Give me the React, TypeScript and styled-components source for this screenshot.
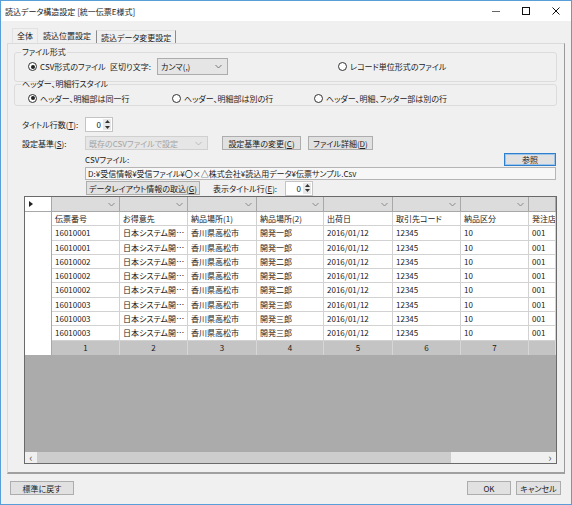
import React from "react";
import styled, { createGlobalStyle } from "styled-components";

const GlobalStyle = createGlobalStyle`
  html, body {
    margin: 0;
    padding: 0;
    background: #f0f0f0;
  }
  body {
    font-family: "Noto Sans CJK JP", "Liberation Sans", sans-serif;
    font-size: 8px;
    color: #1a1a1a;
    font-feature-settings: "palt";
  }
  * {
    box-sizing: border-box;
  }
`;

type Row = [string, string, string, string, string, string, string, string];

const COLUMNS = ["伝票番号", "お得意先", "納品場所(1)", "納品場所(2)", "出荷日", "取引先コード", "納品区分", "発注店"];
const COMPANY = "日本システム開発株式会社";
const ROWS: Row[] = [
  ["16010001", COMPANY, "香川県高松市", "開発一郎", "2016/01/12", "12345", "10", "001"],
  ["16010001", COMPANY, "香川県高松市", "開発一郎", "2016/01/12", "12345", "10", "001"],
  ["16010002", COMPANY, "香川県高松市", "開発二郎", "2016/01/12", "12345", "10", "001"],
  ["16010002", COMPANY, "香川県高松市", "開発二郎", "2016/01/12", "12345", "10", "001"],
  ["16010002", COMPANY, "香川県高松市", "開発二郎", "2016/01/12", "12345", "10", "001"],
  ["16010003", COMPANY, "香川県高松市", "開発三郎", "2016/01/12", "12345", "10", "001"],
  ["16010003", COMPANY, "香川県高松市", "開発三郎", "2016/01/12", "12345", "10", "001"],
  ["16010003", COMPANY, "香川県高松市", "開発三郎", "2016/01/12", "12345", "10", "001"],
];

const Chevron: React.FC<{ color?: string }> = ({ color = "#777" }) => (
  <svg width="7" height="5" viewBox="0 0 7 5">
    <polyline points="0.5,1 3.5,4 6.5,1" fill="none" stroke={color} strokeWidth="1" />
  </svg>
);

const SpinBox: React.FC<{ value: string }> = ({ value }) => (
  <Spin>
    <SpinValue>{value}</SpinValue>
    <SpinArrows>
      <SpinArrow>
        <svg width="5" height="3" viewBox="0 0 5 3">
          <polygon points="0,3 2.5,0 5,3" fill="#333" />
        </svg>
      </SpinArrow>
      <SpinArrow>
        <svg width="5" height="3" viewBox="0 0 5 3">
          <polygon points="0,0 2.5,3 5,0" fill="#333" />
        </svg>
      </SpinArrow>
    </SpinArrows>
  </Spin>
);

const Radio: React.FC<{ checked?: boolean; children: React.ReactNode }> = ({ checked, children }) => (
  <RadioLabel>
    <RadioCircle $checked={checked} />
    {children}
  </RadioLabel>
);

const App: React.FC = () => {
  return (
    <>
      <GlobalStyle />
      <Window>
        <TitleBar>
          <TitleText>読込データ構造設定 [統一伝票E様式]</TitleText>
          <Controls>
            <ControlButton>
              <svg width="10" height="10" viewBox="0 0 10 10">
                <line x1="1" y1="5.5" x2="9" y2="5.5" stroke="#666" strokeWidth="1" />
              </svg>
            </ControlButton>
            <ControlButton>
              <svg width="10" height="10" viewBox="0 0 10 10">
                <rect x="1.5" y="1.5" width="7" height="7" fill="none" stroke="#111" strokeWidth="1" />
              </svg>
            </ControlButton>
            <ControlButton>
              <svg width="10" height="10" viewBox="0 0 10 10">
                <path d="M1.5 1.5 L8.5 8.5 M8.5 1.5 L1.5 8.5" stroke="#111" strokeWidth="1" />
              </svg>
            </ControlButton>
          </Controls>
        </TitleBar>

        <Body>
          <TabStrip>
            <Tab>全体</Tab>
            <Tab $active>読込位置設定</Tab>
            <Tab $outlined>読込データ変更設定</Tab>
          </TabStrip>

          <Panel>
            <Group>
              <Legend>ファイル形式</Legend>
              <FormatRow>
                <Radio checked>CSV形式のファイル</Radio>
                <DelimiterLabel>区切り文字:</DelimiterLabel>
                <Combo $width={71}>
                  <span>カンマ(,)</span>
                  <Chevron />
                </Combo>
                <RecordRadio>
                  <Radio>レコード単位形式のファイル</Radio>
                </RecordRadio>
              </FormatRow>
            </Group>

            <Group $overlap>
              <Legend>ヘッダー、明細行スタイル</Legend>
              <StyleRow>
                <Radio checked>ヘッダー、明細部は同一行</Radio>
                <Radio>ヘッダー、明細部は別の行</Radio>
                <Radio>ヘッダー、明細、フッター部は別の行</Radio>
              </StyleRow>
            </Group>

            <FieldRow $top={11} $height={15}>
              <FieldLabel>タイトル行数(<u>T</u>):</FieldLabel>
              <SpinBox value="0" />
            </FieldRow>

            <FieldRow $top={4} $height={14}>
              <FieldLabel>設定基準(<u>S</u>):</FieldLabel>
              <Combo $width={123} $disabled>
                <span>既存のCSVファイルで設定</span>
                <Chevron color="#bbb" />
              </Combo>
              <Button $width={79} $gap={14}>設定基準の変更(<u>C</u>)</Button>
              <Button $width={65} $gap={7}>ファイル詳細(<u>D</u>)</Button>
            </FieldRow>

            <CsvRow>
              <span>CSVファイル:</span>
              <DefaultButton>参照</DefaultButton>
            </CsvRow>
            <PathField>D:¥受信情報¥受信ファイル¥〇×△株式会社¥読込用データ¥伝票サンプル.Csv</PathField>

            <ImportRow>
              <Button $width={114} $gap={0}>データレイアウト情報の取込(<u>G</u>)</Button>
              <ShowTitleLabel>表示タイトル行(<u>E</u>):</ShowTitleLabel>
              <SpinBox value="0" />
            </ImportRow>

            <Grid>
              <GridRow $height={15}>
                <SelectorCell>
                  <svg width="4" height="6" viewBox="0 0 4 6">
                    <polygon points="0,0 4,3 0,6" fill="#222" />
                  </svg>
                </SelectorCell>
                {COLUMNS.map((c, i) => (
                  <DropCell key={c}>{i < 7 && <Chevron color="#8a8a8a" />}</DropCell>
                ))}
              </GridRow>
              <GridRow $height={14.3}>
                <RowHeadCell />
                {COLUMNS.map((c, ci) => (
                  <DataCell key={c} $clip={ci === 7}>
                    {c}
                  </DataCell>
                ))}
              </GridRow>
              {ROWS.map((r, ri) => (
                <GridRow key={ri} $height={14.3}>
                  <RowHeadCell />
                  {r.map((v, ci) => (
                    <DataCell key={ci} $clip={ci === 7}>
                      {v}
                    </DataCell>
                  ))}
                </GridRow>
              ))}
              <GridRow $height={14.5}>
                <RowHeadCell />
                {COLUMNS.map((c, i) => (
                  <NumberCell key={c}>{i < 7 ? i + 1 : ""}</NumberCell>
                ))}
              </GridRow>
              <GridFill />
              <ScrollBar>
                <ScrollArrow>‹</ScrollArrow>
                <ScrollThumb />
                <ScrollTrack />
                <ScrollArrow>›</ScrollArrow>
              </ScrollBar>
            </Grid>
          </Panel>

          <Footer>
            <Button $width={64} $gap={0} $height={14}>標準に戻す</Button>
            <FooterRight>
              <Button $width={44} $gap={0} $height={14}>OK</Button>
              <Button $width={45} $gap={5} $height={14}>キャンセル</Button>
            </FooterRight>
          </Footer>
        </Body>
      </Window>
    </>
  );
};

const Window = styled.div`
  width: 572px;
  height: 505px;
  border: 1px solid #5a9ed8;
  background: #f0f0f0;
  display: flex;
  flex-direction: column;
`;

const TitleBar = styled.div`
  height: 20px;
  background: #fff;
  display: flex;
  align-items: center;
  padding-left: 4px;
`;

const TitleText = styled.div`
  flex: 1;
  color: #222;
`;

const Controls = styled.div`
  display: flex;
  height: 100%;
`;

const ControlButton = styled.div`
  width: 30px;
  display: flex;
  align-items: center;
  justify-content: center;
`;

const Body = styled.div`
  flex: 1;
  display: flex;
  flex-direction: column;
  padding: 0 6px;
`;

const TabStrip = styled.div`
  display: flex;
  height: 15px;
  margin-top: 7px;
  padding-left: 5px;
`;

const Tab = styled.div<{ $active?: boolean; $outlined?: boolean }>`
  padding: 0 4px;
  line-height: 14px;
  border: 1px solid ${(p) => (p.$active ? "transparent" : "#e2e2e2")};
  border-bottom: none;
  border-left-color: ${(p) => (p.$outlined ? "#8c8c8c" : undefined)};
  border-right-color: ${(p) => (p.$outlined ? "#8c8c8c" : undefined)};
  margin-top: ${(p) => (p.$outlined ? "2px" : "0")};
  background: #f0f0f0;
`;

const Panel = styled.div`
  height: 431px;
  border: 1px solid #dadada;
  border-right-color: #9a9a9a;
  border-bottom: 2px solid #a0a0a0;
  display: flex;
  flex-direction: column;
`;

const Group = styled.fieldset<{ $overlap?: boolean }>`
  margin: ${(p) => (p.$overlap ? "-2px" : "4px")} 7px 0 6px;
  padding: 0 0 0 6px;
  border: 1px solid #dcdcdc;
  border-radius: 3px;
  min-inline-size: 0;
`;

const Legend = styled.legend`
  padding: 0 1px;
  line-height: 8px;
  height: 8px;
  color: #222;
`;

const FormatRow = styled.div`
  display: flex;
  align-items: center;
  height: 17px;
  margin: 2px 0 6px;
  padding-left: 7px;
`;

const StyleRow = styled.div`
  display: grid;
  grid-template-columns: 144px 142px 1fr;
  align-items: center;
  height: 12px;
  margin: 4px 0 1px;
  padding-left: 7px;
`;

const RadioLabel = styled.label`
  display: flex;
  align-items: center;
  gap: 3px;
  white-space: nowrap;
  min-width: 82px;
`;

const RadioCircle = styled.span<{ $checked?: boolean }>`
  position: relative;
  width: 9px;
  height: 9px;
  border-radius: 50%;
  border: 1px solid #333;
  background: #fff;
  flex: none;
  &::after {
    content: "";
    display: ${(p) => (p.$checked ? "block" : "none")};
    position: absolute;
    inset: 1.5px;
    border-radius: 50%;
    background: #222;
  }
`;

const DelimiterLabel = styled.span`
  width: 47px;
  white-space: nowrap;
`;

const RecordRadio = styled.div`
  margin-left: 110px;
`;

const Combo = styled.div<{ $width: number; $disabled?: boolean }>`
  width: ${(p) => p.$width}px;
  height: 100%;
  display: flex;
  align-items: center;
  justify-content: space-between;
  padding: 0 5px 0 3px;
  background: ${(p) => (p.$disabled ? "#e6e6e6" : "#e5e5e5")};
  border: 1px solid ${(p) => (p.$disabled ? "#d0d0d0" : "#acacac")};
  color: ${(p) => (p.$disabled ? "#a3a3a3" : "#111")};
  white-space: nowrap;
`;

const FieldRow = styled.div<{ $top: number; $height: number }>`
  display: flex;
  align-items: center;
  height: ${(p) => p.$height}px;
  margin-top: ${(p) => p.$top}px;
  padding-left: 14px;
`;

const FieldLabel = styled.span`
  width: 63px;
  white-space: nowrap;
`;

const Spin = styled.div`
  width: 28px;
  height: 15px;
  display: flex;
  background: #fff;
  border: 1px solid #c4c4c4;
`;

const SpinValue = styled.span`
  flex: 1;
  text-align: right;
  padding-right: 2px;
  line-height: 13px;
`;

const SpinArrows = styled.div`
  width: 8px;
  display: flex;
  flex-direction: column;
  margin: 1px 1px 1px 0;
`;

const SpinArrow = styled.div`
  flex: 1;
  display: flex;
  align-items: center;
  justify-content: center;
  background: #e8e8e8;
`;

const Button = styled.div<{ $width: number; $gap: number; $height?: number }>`
  width: ${(p) => p.$width}px;
  height: ${(p) => (p.$height ? `${p.$height}px` : "100%")};
  margin-left: ${(p) => p.$gap}px;
  display: flex;
  align-items: center;
  justify-content: center;
  background: #e1e1e1;
  border: 1px solid #adadad;
  white-space: nowrap;
  color: #222;
`;

const CsvRow = styled.div`
  display: flex;
  align-items: center;
  justify-content: space-between;
  height: 13px;
  margin: 3px 8px 0 77px;
`;

const DefaultButton = styled.div`
  width: 52px;
  height: 13px;
  display: flex;
  align-items: center;
  justify-content: center;
  background: #e1e1e1;
  border: 1px solid #2f7fcf;
  box-shadow: inset 0 0 0 1px #9cc3ea;
  color: #222;
`;

const PathField = styled.div`
  height: 13px;
  margin: 1px 8px 0 77px;
  padding-left: 2px;
  line-height: 11px;
  background: #f7f7f7;
  border: 1px solid #b5b5b5;
  white-space: nowrap;
  overflow: hidden;
`;

const ImportRow = styled.div`
  display: flex;
  align-items: center;
  height: 14px;
  margin: 1px 0 0 78px;
`;

const ShowTitleLabel = styled.span`
  width: 72px;
  margin-left: 13px;
  white-space: nowrap;
`;

const Grid = styled.div`
  height: 268px;
  margin: 1px 7px 0 16px;
  border: 1px solid #6a6a6a;
  display: flex;
  flex-direction: column;
  overflow: hidden;
`;

const GridRow = styled.div<{ $height: number }>`
  display: grid;
  grid-template-columns: 27px 68px 68px 69px 67px 69px 68px 68px 1fr;
  height: ${(p) => p.$height}px;
  flex: none;
`;

const SelectorCell = styled.div`
  background: #fff;
  border-right: 1px solid #a8a8a8;
  border-bottom: 1px solid #a8a8a8;
  display: flex;
  align-items: center;
  padding-left: 4px;
`;

const DropCell = styled.div`
  background: #dcdcdc;
  border-right: 1px solid #a8a8a8;
  border-bottom: 1px solid #a8a8a8;
  display: flex;
  align-items: center;
  justify-content: flex-end;
  padding-right: 4px;
`;

const RowHeadCell = styled.div`
  background: #fff;
  border-right: 1px solid #a8a8a8;
`;

const DataCell = styled.div<{ $clip?: boolean }>`
  background: #fff;
  border-right: 1px solid #d2d2d2;
  border-bottom: 1px solid #d2d2d2;
  padding: 0 ${(p) => (p.$clip ? "0" : "2px")} 0 3px;
  line-height: 13px;
  white-space: nowrap;
  overflow: hidden;
  text-overflow: ${(p) => (p.$clip ? "clip" : "ellipsis")};
  min-width: 0;
`;

const NumberCell = styled.div`
  background: #c4c4c4;
  border-right: 1px solid #d6d6d6;
  display: flex;
  align-items: center;
  justify-content: center;
`;

const GridFill = styled.div`
  flex: 1;
  background: #ababab;
`;

const ScrollBar = styled.div`
  height: 11px;
  display: flex;
  background: #f0f0f0;
  flex: none;
`;

const ScrollArrow = styled.div`
  width: 12px;
  display: flex;
  align-items: center;
  justify-content: center;
  color: #555;
  font-size: 11px;
  line-height: 11px;
`;

const ScrollThumb = styled.div`
  width: 414px;
  background: #cdcdcd;
`;

const ScrollTrack = styled.div`
  flex: 1;
`;

const Footer = styled.div`
  display: flex;
  align-items: center;
  justify-content: space-between;
  margin-top: 7px;
  padding: 0 4px 0 3px;
`;

const FooterRight = styled.div`
  display: flex;
`;

export default App;
